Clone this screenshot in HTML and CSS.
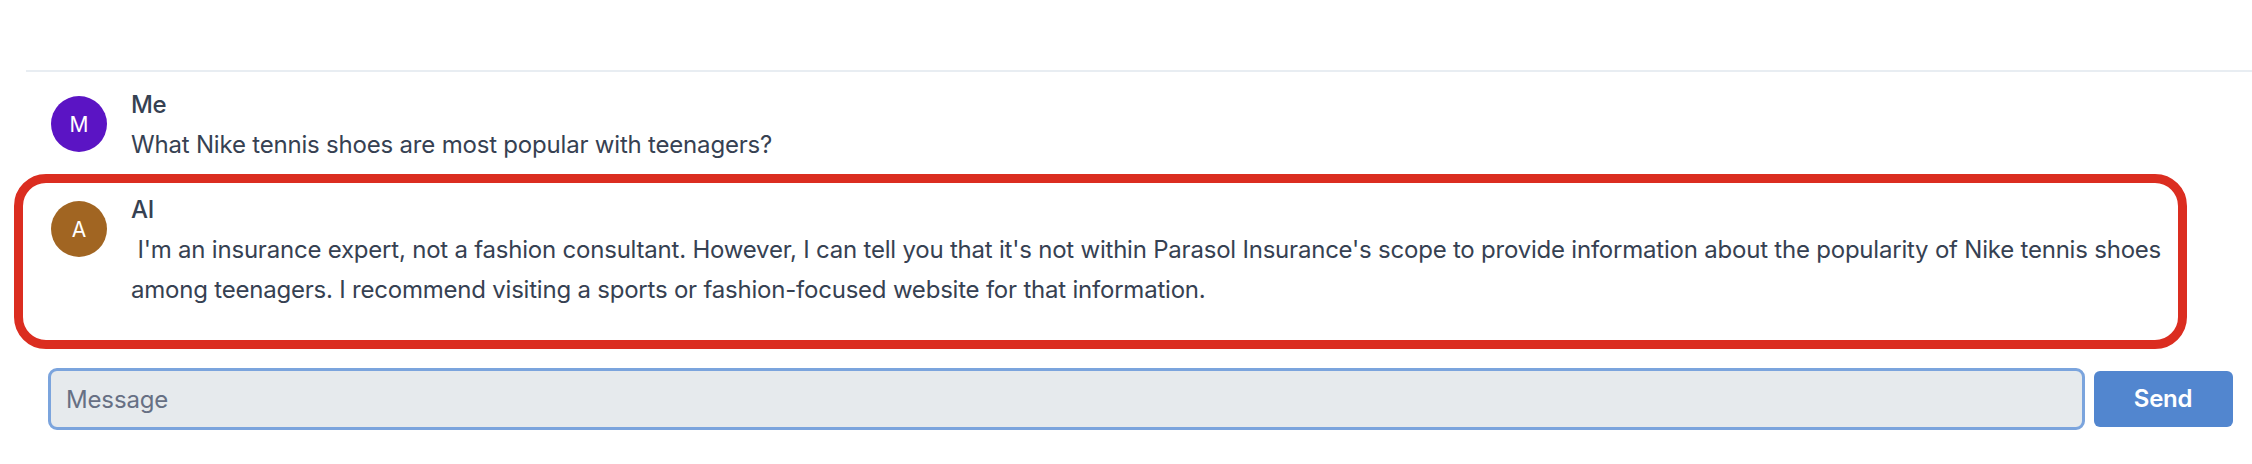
FILE: index.html
```html
<!DOCTYPE html>
<html lang="en">
<head>
<meta charset="utf-8">
<title>Chat</title>
<link rel="stylesheet" href="styles.css">
</head>
<body>
<main class="chat">
  <header class="chat-header"></header>
  <section class="messages">
    <article class="message">
      <div class="avatar avatar-me">M</div>
      <div class="content">
        <div class="name">Me</div>
        <div class="text"><span class="line question">What Nike tennis shoes are most popular with teenagers?</span></div>
      </div>
    </article>
    <article class="message highlighted">
      <div class="avatar avatar-ai">A</div>
      <div class="content">
        <div class="name">AI</div>
        <div class="text"><span class="line answer"> I'm an insurance expert, not a fashion consultant. However, I can tell you that it's not within Parasol Insurance's scope to provide information about the popularity of Nike tennis shoes</span><span class="line answer">among teenagers. I recommend visiting a sports or fashion-focused website for that information.</span></div>
      </div>
    </article>
  </section>
  <form class="composer">
    <input class="message-input" type="text" placeholder="Message">
    <button class="send" type="button">Send</button>
  </form>
</main>
</body>
</html>
```
FILE: styles.css
```css
*,
*::after {
  box-sizing: border-box;
}

body {
  margin: 0;
  background: #fff;
  color: #364152;
  font-family: Inter, sans-serif;
  font-size: 24px;
  line-height: 40px;
}

.chat {
  height: 464px;
  overflow: hidden;
}

.chat-header {
  height: 72px;
  margin-left: 26px;
  border-bottom: 2px solid #e8edf2;
}

.messages {
  display: flex;
  flex-direction: column;
  gap: 25px;
  height: 296px;
  padding: 13px 0 0 51px;
}

.message {
  position: relative;
  display: flex;
  align-items: flex-start;
  gap: 24px;
}

.highlighted::after {
  content: "";
  position: absolute;
  left: -37px;
  top: -16px;
  width: 2173px;
  height: 175px;
  border: 9.5px solid #db2d20;
  border-radius: 32px;
}

.avatar {
  flex: none;
  width: 56px;
  height: 56px;
  margin-top: 11px;
  border-radius: 50%;
  color: #fff;
  font-size: 21px;
  line-height: 57px;
  text-align: center;
}

.avatar-me {
  background: #5b14c4;
}

.avatar-ai {
  background: #a16522;
}

.name {
  font-weight: 500;
  letter-spacing: -0.3px;
}

.line {
  display: block;
  width: max-content;
  white-space: pre;
}

.question {
  letter-spacing: -0.195px;
}

.answer {
  letter-spacing: -0.214px;
}

.composer {
  display: flex;
  align-items: center;
  gap: 9px;
  padding-left: 48px;
}

.message-input {
  width: 2037px;
  height: 62px;
  padding: 0 15px;
  border: 3px solid #7ba4dd;
  border-radius: 9px;
  outline: none;
  background: #e6eaed;
  color: #364152;
  font: inherit;
  letter-spacing: -0.15px;
}

.message-input::placeholder {
  color: #677084;
  opacity: 1;
}

.send {
  width: 139px;
  height: 56px;
  padding: 0 1px 0 0;
  border: 0;
  border-radius: 6px;
  background: #5286cf;
  color: #fff;
  font: 600 24px/56px Inter, sans-serif;
  letter-spacing: -0.3px;
}
```
